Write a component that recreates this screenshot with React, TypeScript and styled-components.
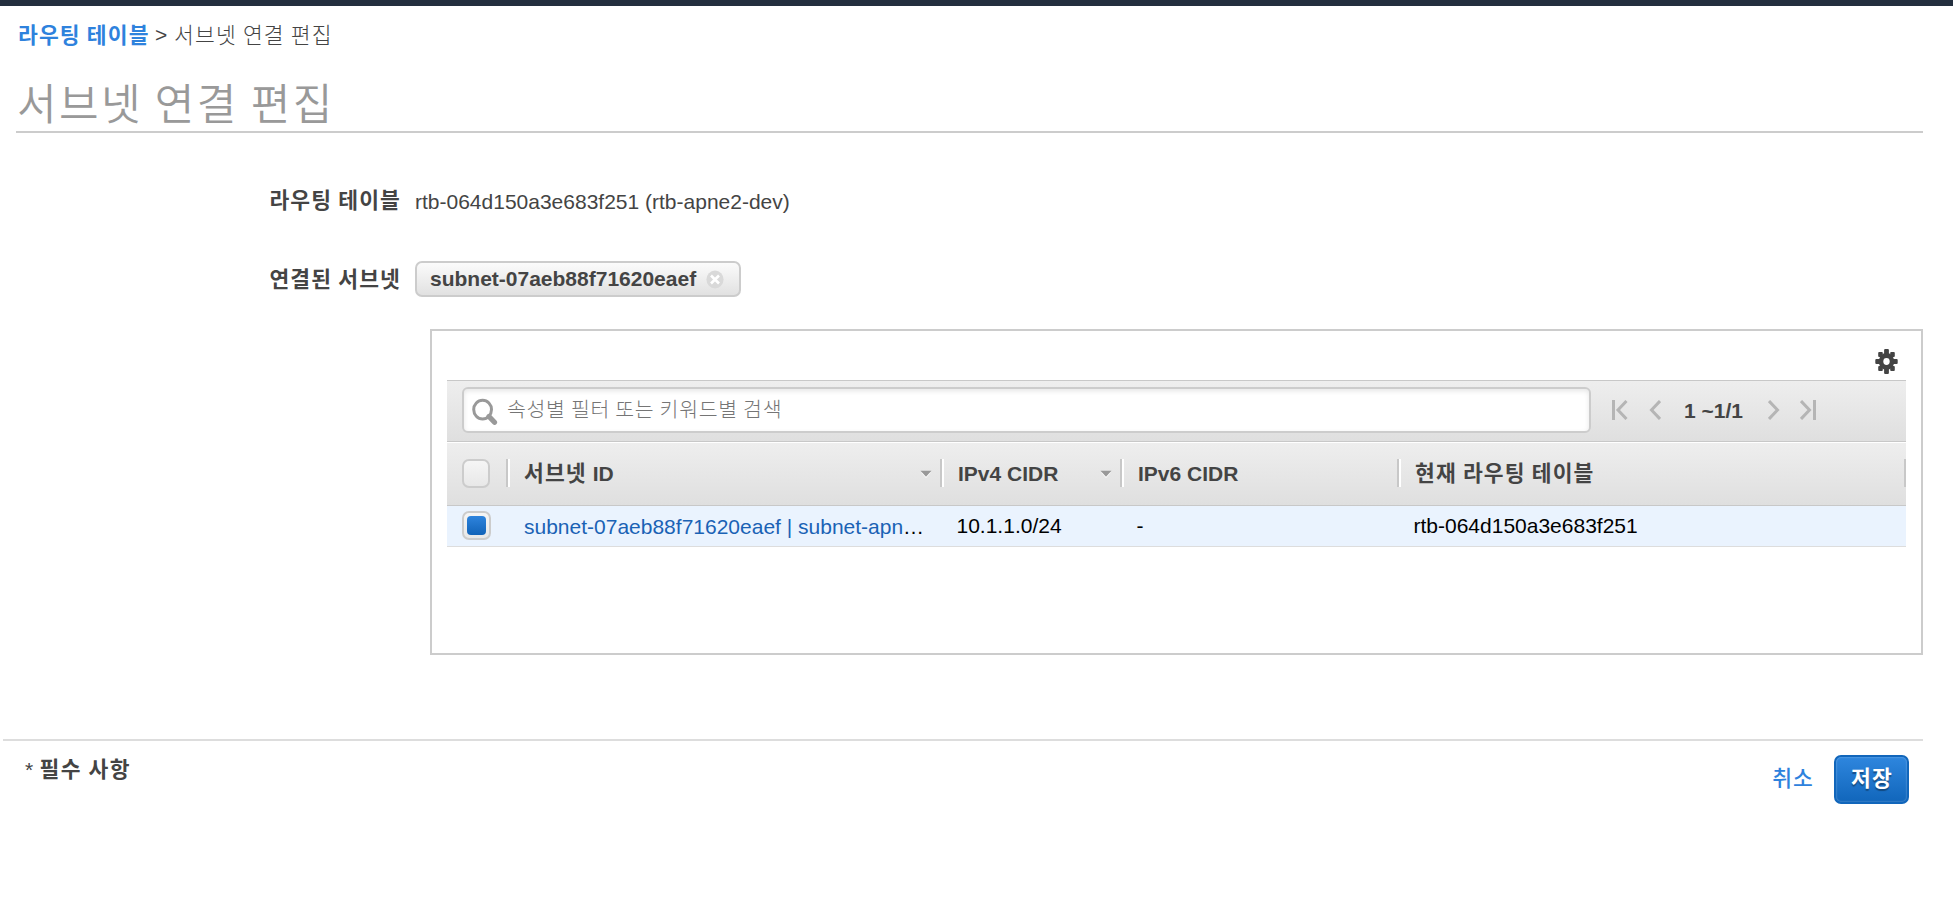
import React from "react";
import styled, { createGlobalStyle } from "styled-components";

const GlobalStyle = createGlobalStyle`
  *, *::after { box-sizing: border-box; }
  body {
    margin: 0;
    background: #fff;
    color: #444;
    font-family: "Liberation Sans", "Noto Sans CJK KR", sans-serif;
    font-size: 21px;
    line-height: 30px;
  }
`;

const Page = styled.div`
  display: flex;
  flex-direction: column;
  height: 916px;
  overflow: hidden;
`;

const TopBar = styled.div`
  height: 6px;
  flex: none;
  background: #232f3e;
`;

const Korean = styled.span<{ $size?: number; $weight?: number; $spacing?: number }>`
  font-family: "Noto Sans CJK KR", sans-serif;
  font-size: ${(p) => p.$size ?? 21.5}px;
  font-weight: ${(p) => p.$weight ?? 700};
  letter-spacing: ${(p) => p.$spacing ?? 1.15}px;
`;

const Breadcrumb = styled.nav`
  display: flex;
  height: 30px;
  margin: 13px 0 0 18px;
  white-space: nowrap;
`;

const CrumbLink = styled.a`
  width: 131px;
  color: #2e82dd;
`;

const CrumbSeparator = styled.span`
  width: 25px;
  padding: 1px 0 0 6px;
`;

const Title = styled.h1`
  height: 84px;
  margin: 0 30px 0 16px;
  padding: 22px 0 0 1px;
  border-bottom: 2px solid #ccc;
  color: #999;
  font-weight: 400;
  line-height: 60px;
`;

const Field = styled.div<{ $top: number }>`
  display: flex;
  align-items: center;
  height: 36px;
  margin-top: ${(p) => p.$top}px;
`;

const FieldLabel = styled.div`
  width: 415px;
  padding: 0 14px 1px 0;
  text-align: right;
  white-space: nowrap;
`;

const FieldValue = styled.span`
  padding-top: 3px;
`;

const Chip = styled.div`
  display: flex;
  align-items: center;
  justify-content: space-between;
  width: 326px;
  height: 36px;
  padding: 0 15px 0 13px;
  border: 2px solid #ccc;
  border-radius: 7px;
  background: linear-gradient(#fbfbfb, #e1e1e1);
  font-weight: 700;
`;

const Panel = styled.section`
  width: 1493px;
  height: 326px;
  margin: 32px 0 0 430px;
  padding: 0 15px;
  border: 2px solid #ccc;
`;

const PanelTools = styled.div`
  display: flex;
  justify-content: flex-end;
  height: 49px;
  padding: 18px 8px 0 0;
`;

const Toolbar = styled.div`
  display: flex;
  height: 62px;
  padding: 6px 0 0 15px;
  border-top: 1px solid #c8c8c8;
  border-bottom: 1px solid #c8c8c8;
  background: linear-gradient(#eee, #dfdfdf);
`;

const SearchBox = styled.div`
  display: flex;
  width: 1129px;
  height: 46px;
  padding: 9px 0 0 8px;
  border: 2px solid #ccc;
  border-radius: 6px;
  background: #fff;
  box-shadow: inset 0 2px 5px rgba(0, 0, 0, 0.1);
  color: #757575;
`;

const Placeholder = styled.div`
  margin: -5px 0 0 9px;
`;

const Pager = styled.div`
  display: flex;
  align-items: center;
  height: 46px;
  margin-left: 20px;
`;

const PageRange = styled.span`
  width: 58px;
  margin: 1px 26px 0 23px;
  font-weight: 700;
  white-space: nowrap;
`;

const PagerIcon = styled.svg<{ $gap?: number }>`
  margin-right: ${(p) => p.$gap ?? 0}px;
  fill: none;
  stroke: #b5b5b5;
  stroke-width: 3;
`;

const columns = "60px 434px 180px 277px 508px";

const HeaderRow = styled.div`
  display: grid;
  grid-template-columns: ${columns};
  height: 64px;
  border-top: 1px solid #fff;
  border-bottom: 1px solid #c8c8c8;
  background: linear-gradient(#eee, #dfdfdf);
  font-weight: 700;
`;

const HeaderCell = styled.div`
  position: relative;
  display: flex;
  align-items: center;
  justify-content: space-between;
  padding: 0 9px 0 17px;
  white-space: nowrap;

  &::after {
    content: "";
    position: absolute;
    top: 16px;
    right: -3px;
    width: 4px;
    height: 28px;
    border-left: 2px solid #c8c8c8;
    background: #fff;
  }

  &:last-child::after {
    right: 0;
    width: 2px;
  }
`;

const SelectHeader = styled(HeaderCell)`
  padding: 0 0 2px 15px;
`;

const HeaderText = styled.span`
  padding-bottom: 3px;
`;

const Row = styled.div`
  display: grid;
  grid-template-columns: ${columns};
  height: 41px;
  border-bottom: 1px solid #ddd;
  background: #eaf3fe;
  color: #000;
`;

const Cell = styled.div`
  padding: 5px 0 0 15.5px;
  line-height: 30px;
  white-space: nowrap;
`;

const SelectCell = styled.div`
  padding: 5px 0 0 15px;
`;

const SubnetCell = styled(Cell)`
  padding: 6px 0 0 17px;
`;

const SubnetLink = styled.a`
  color: #1a62b5;
`;

const Checkbox = styled.div`
  width: 28px;
  height: 29px;
  padding: 3px;
  border: 2px solid #ccc;
  border-radius: 7px;
  background: linear-gradient(#f5f5f5, #e8e8e8);
`;

const CheckedBox = styled(Checkbox)`
  width: 29px;
`;

const CheckFill = styled.div`
  width: 19px;
  height: 19px;
  border-radius: 4px;
  background: linear-gradient(#2e84dd, #1263b8);
`;

const Footer = styled.footer`
  display: flex;
  justify-content: space-between;
  height: 66px;
  margin: 84px 30px 0 3px;
  padding: 14px 14px 0 22px;
  border-top: 2px solid #ddd;
`;

const Required = styled.div`
  margin-top: -2px;
  word-spacing: 0.6px;
`;

const Actions = styled.div`
  display: flex;
  align-items: center;
  height: 49px;
  gap: 20px;
`;

const CancelLink = styled.a`
  padding-bottom: 3px;
  color: #2e82dd;
`;

const SaveButton = styled.button`
  width: 75px;
  height: 49px;
  padding: 0 0 2px 1px;
  border: 2px solid #1166bb;
  border-radius: 7px;
  background: linear-gradient(#2e86de, #1166bb);
  box-shadow: inset 0 0 2px rgba(255, 255, 255, 0.45);
  color: #fff;
  line-height: 40px;
  text-shadow: 0 2px 1px rgba(0, 0, 0, 0.35);
`;

const RemoveIcon = () => (
  <svg width="18" height="19" viewBox="0 0 18 19">
    <ellipse cx="9" cy="9.5" rx="8.6" ry="9" fill="#d9d9d9" />
    <path d="M5 5.5l8 8M13 5.5l-8 8" stroke="#fff" strokeWidth="2.6" />
  </svg>
);

const SearchIcon = () => (
  <svg width="26" height="27" viewBox="0 0 26 27" fill="none" stroke="#999">
    <ellipse cx="10.6" cy="11.6" rx="8.9" ry="9.4" strokeWidth="3" />
    <path d="M17 18.500l5.500 5.800" strokeWidth="5.2" strokeLinecap="round" />
  </svg>
);

const GearIcon = () => (
  <svg width="23" height="25" viewBox="-11.5 -12.5 23 25" fill="#444">
    <rect x="-2.4" y="-12.4" width="4.8" height="24.8" rx="1" />
    <rect x="-11.2" y="-2.6" width="22.4" height="5.2" rx="1" />
    <ellipse rx="7.7" ry="8.5" />
    {[
      [-8.3, -9.4],
      [3.7, -9.4],
      [-8.3, 4.4],
      [3.7, 4.4],
    ].map(([x, y]) => (
      <rect key={`${x} ${y}`} x={x} y={y} width="4.6" height="5" rx="1" />
    ))}
    <ellipse rx="3.2" ry="3.4" fill="#fff" />
  </svg>
);

const SortArrow = () => (
  <svg width="12" height="8" viewBox="0 0 12 8">
    <path d="M1 2.2h10L6 8z" fill="#fff" />
    <path d="M0.5 0.8h11L6 6.8z" fill="#999" />
  </svg>
);

export default function App() {
  return (
    <>
      <GlobalStyle />
      <Page>
        <TopBar />
        <Breadcrumb>
          <CrumbLink>
            <Korean>라우팅 테이블</Korean>
          </CrumbLink>
          <CrumbSeparator>&gt;</CrumbSeparator>
          <Korean $weight={300} $spacing={1.2}>서브넷 연결 편집</Korean>
        </Breadcrumb>
        <Title>
          <Korean $size={43} $weight={350} $spacing={2.4}>서브넷 연결 편집</Korean>
        </Title>

        <Field $top={49}>
          <FieldLabel>
            <Korean>라우팅 테이블</Korean>
          </FieldLabel>
          <FieldValue>rtb-064d150a3e683f251 (rtb-apne2-dev)</FieldValue>
        </Field>
        <Field $top={43}>
          <FieldLabel>
            <Korean>연결된 서브넷</Korean>
          </FieldLabel>
          <Chip>
            <span>subnet-07aeb88f71620eaef</span>
            <RemoveIcon />
          </Chip>
        </Field>

        <Panel>
          <PanelTools>
            <GearIcon />
          </PanelTools>
          <Toolbar>
            <SearchBox>
              <SearchIcon />
              <Placeholder>
                <Korean $size={20.5} $weight={300} $spacing={0.7}>속성별 필터 또는 키워드별 검색</Korean>
              </Placeholder>
            </SearchBox>
            <Pager>
              <PagerIcon width="17" height="20" viewBox="0 0 17 20" $gap={21}>
                <path d="M2.5 0v20M15.5 1L7 10l8.500 9" />
              </PagerIcon>
              <PagerIcon width="12" height="20" viewBox="0 0 12 20">
                <path d="M11 1L2.500 10l8.500 9" />
              </PagerIcon>
              <PageRange>1 ~1/1</PageRange>
              <PagerIcon width="12" height="20" viewBox="0 0 12 20" $gap={20}>
                <path d="M1 1l8.500 9L1 19" />
              </PagerIcon>
              <PagerIcon width="17" height="20" viewBox="0 0 17 20">
                <path d="M1 1l8.500 9L1 19M14.500 0v20" />
              </PagerIcon>
            </Pager>
          </Toolbar>
          <HeaderRow>
            <SelectHeader>
              <Checkbox />
            </SelectHeader>
            <HeaderCell>
              <HeaderText>
                <Korean>서브넷</Korean> ID
              </HeaderText>
              <SortArrow />
            </HeaderCell>
            <HeaderCell>
              IPv4 CIDR
              <SortArrow />
            </HeaderCell>
            <HeaderCell>IPv6 CIDR</HeaderCell>
            <HeaderCell>
              <HeaderText>
                <Korean>현재 라우팅 테이블</Korean>
              </HeaderText>
            </HeaderCell>
          </HeaderRow>
          <Row>
            <SelectCell>
              <CheckedBox>
                <CheckFill />
              </CheckedBox>
            </SelectCell>
            <SubnetCell>
              <SubnetLink>subnet-07aeb88f71620eaef | subnet-apn</SubnetLink>…
            </SubnetCell>
            <Cell>10.1.1.0/24</Cell>
            <Cell>-</Cell>
            <Cell>rtb-064d150a3e683f251</Cell>
          </Row>
        </Panel>

        <Footer>
          <Required>
            * <Korean $spacing={1.3}>필수 사항</Korean>
          </Required>
          <Actions>
            <CancelLink>
              <Korean $weight={500}>취소</Korean>
            </CancelLink>
            <SaveButton>
              <Korean>저장</Korean>
            </SaveButton>
          </Actions>
        </Footer>
      </Page>
    </>
  );
}
